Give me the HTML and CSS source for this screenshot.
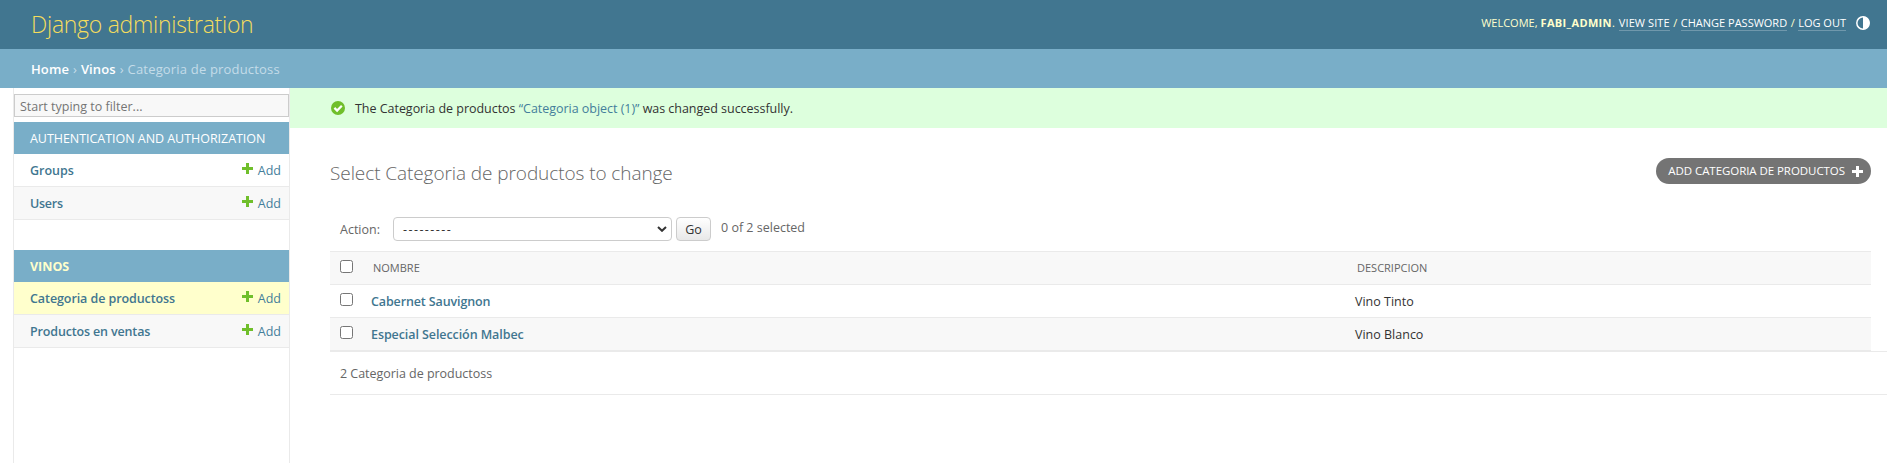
FILE: index.html
```html
<!DOCTYPE html>
<html lang="en">
<head>
<meta charset="utf-8">
<title>Select Categoria de productos to change | Django site admin</title>
<link rel="stylesheet" href="styles.css">
</head>
<body>
<header class="header">
  <h1 class="site-name"><span class="t-site">Django administration</span></h1>
  <div class="user-tools">
    <span class="t-welcome">WELCOME,</span>
    <strong class="t-user">FABI_ADMIN</strong><span class="dot">.</span>
    <a class="t-view">VIEW SITE</a><span class="slash">/</span><a class="t-pass">CHANGE PASSWORD</a><span class="slash">/</span><a class="t-logout">LOG OUT</a>
    <svg class="theme" viewBox="0 0 14 14"><circle cx="7" cy="7" r="6.2" fill="none" stroke="#fff" stroke-width="1.5"/><path d="M7 0.5a6.5 6.5 0 0 1 0 13z" fill="#fff"/></svg>
  </div>
</header>
<nav class="breadcrumbs"><a class="t-home">Home</a><i>›</i><a class="t-vinos">Vinos</a><i>›</i><span class="t-crumb">Categoria de productoss</span></nav>
<div class="main">
  <aside class="sidebar">
    <div class="filter"><span class="t-filter">Start typing to filter...</span></div>
    <section class="module">
      <h2 class="caption"><span class="t-auth">AUTHENTICATION AND AUTHORIZATION</span></h2>
      <div class="model"><a class="name t-groups">Groups</a><a class="add"><svg class="plus" viewBox="0 0 11 11"><path d="M4 0h3v4h4v3H7v4H4V7H0V4h4z"/></svg><span class="t-add">Add</span></a></div>
      <div class="model alt"><a class="name t-users">Users</a><a class="add"><svg class="plus" viewBox="0 0 11 11"><path d="M4 0h3v4h4v3H7v4H4V7H0V4h4z"/></svg><span class="t-add">Add</span></a></div>
    </section>
    <section class="module">
      <h2 class="caption current"><span class="t-app">VINOS</span></h2>
      <div class="model selected"><a class="name t-cat">Categoria de productoss</a><a class="add"><svg class="plus" viewBox="0 0 11 11"><path d="M4 0h3v4h4v3H7v4H4V7H0V4h4z"/></svg><span class="t-add">Add</span></a></div>
      <div class="model alt"><a class="name t-prod">Productos en ventas</a><a class="add"><svg class="plus" viewBox="0 0 11 11"><path d="M4 0h3v4h4v3H7v4H4V7H0V4h4z"/></svg><span class="t-add">Add</span></a></div>
    </section>
  </aside>
  <main class="content">
    <div class="message"><svg class="check" viewBox="0 0 14 14"><circle cx="7" cy="7" r="7" fill="#70bf2b"/><path d="M3.4 6.9l2.7 2.7 4.7-4.9" fill="none" stroke="#fff" stroke-width="2.2"/></svg><span class="t-msg">The Categoria de productos <a>“Categoria object (1)”</a> was changed successfully.</span></div>
    <div class="title-row">
      <h1 class="title"><span class="t-title">Select Categoria de productos to change</span></h1>
      <a class="add-button"><span class="t-button">ADD CATEGORIA DE PRODUCTOS</span><svg class="plus" viewBox="0 0 11 11"><path d="M4 0h3v4h4v3H7v4H4V7H0V4h4z"/></svg></a>
    </div>
    <div class="actions">
      <label class="t-action">Action:</label>
      <div class="select"><span class="t-dash">---------</span><svg class="arrow" viewBox="0 0 10 6"><path d="M1 1l4 3.8L9 1" fill="none" stroke="#333" stroke-width="2"/></svg></div>
      <div class="go"><span class="t-go">Go</span></div>
      <span class="counter">0 of 2 selected</span>
    </div>
    <div class="results">
      <div class="row head"><span class="box"></span><span class="col">NOMBRE</span><span class="col">DESCRIPCION</span></div>
      <div class="row"><span class="box"></span><a class="col t-cab">Cabernet Sauvignon</a><span class="col">Vino Tinto</span></div>
      <div class="row alt"><span class="box"></span><a class="col t-esp">Especial Selección Malbec</a><span class="col">Vino Blanco</span></div>
    </div>
    <p class="paginator">2 Categoria de productoss</p>
  </main>
</div>
</body>
</html>
```
FILE: styles.css
```css
* { box-sizing: border-box; }
body { margin: 0; height: 463px; overflow: hidden; background: #fff; color: #333; font-family: "Open Sans", "Noto Sans", sans-serif; font-size: 12.5px; line-height: 18px; }
h1, h2, p { margin: 0; font-weight: 400; }
span, a, strong, label { white-space: nowrap; }
i { font-style: normal; }
.header { height: 49px; background: #417690; display: flex; justify-content: space-between; padding: 0 17px 0 31px; }
.site-name { color: #f5dd5d; font-size: 23px; font-weight: 300; line-height: 49px; letter-spacing: -.28px; }
.user-tools { display: flex; height: 46px; align-items: center; color: #ffc; font-size: 11px; }
.user-tools a { color: #fff; border-bottom: 1px solid rgba(255,255,255,.25); line-height: 15px; }
.t-user { font-weight: 700; margin-left: 3px; letter-spacing: .35px; }
.t-view { letter-spacing: .1px; }
.dot { margin-right: 4px; }
.slash { margin: 0 3.5px; }
.theme { width: 14px; height: 14px; margin-left: 10px; }
.breadcrumbs { height: 39px; background: #79aec8; display: flex; align-items: center; padding: 0 0 0 31px; color: #c4dce8; font-size: 13px; }
.breadcrumbs a { color: #fff; font-weight: 600; letter-spacing: .1px; }
.breadcrumbs i { margin: 0 4px; }
.t-crumb { letter-spacing: .18px; }
.main { display: flex; height: 375px; padding-left: 13px; }
.sidebar { width: 277px; border: solid #eaeaea; border-width: 0 1px; padding-top: 6px; }
.filter { height: 23px; border: 1px solid #ccc; background: #f8f8f8; color: #757575; padding-left: 5px; line-height: 23px; }
.module { margin-top: 5px; }
.module + .module { margin-top: 30px; }
.caption { height: 32px; background: #79aec8; color: #fff; padding-left: 16px; font-size: 12.5px; line-height: 33px; }
.t-auth { letter-spacing: -.04px; }
.current { color: #ffc; font-weight: 700; }
.model { height: 33px; border-bottom: 1px solid #eaeaea; display: flex; justify-content: space-between; padding: 0 8px 0 16px; line-height: 34px; color: #417690; }
.alt { background: #f8f8f8; }
.selected { background: #ffc; }
.name { font-weight: 600; }
.t-users { letter-spacing: -.25px; }
.t-cat { letter-spacing: -.08px; }
.t-prod { letter-spacing: -.15px; }
.add { display: flex; color: #447e9b; }
.plus { width: 11px; height: 11px; fill: #70bf2b; }
.add .plus { margin: 9px 5px 0 0; }
.content { flex: 1; min-width: 0; }
.message { height: 40px; background: #dfd; display: flex; align-items: center; padding-left: 41px; }
.t-msg { letter-spacing: -.03px; padding-top: 2px; }
.message a { color: #447e9b; }
.check { width: 14px; height: 14px; margin-right: 10px; }
.title-row { display: flex; justify-content: space-between; padding: 30px 16px 0 40px; height: 89px; }
.title { font-size: 19px; font-weight: 300; color: #666; line-height: 30px; letter-spacing: -.08px; }
.add-button { height: 26px; border-radius: 13px; background: #747474; color: #fff; display: flex; align-items: center; padding: 0 8px 0 12px; font-size: 11.5px; letter-spacing: -.06px; }
.add-button .plus { fill: #fff; margin-left: 7px; }
.actions { display: flex; padding-left: 50px; height: 34px; color: #666; line-height: 25px; }
.select { width: 279px; height: 24px; border: 1px solid #ccc; border-radius: 4px; margin-left: 13px; padding: 0 4px 0 9px; display: flex; align-items: center; justify-content: space-between; color: #333; }
.t-dash { letter-spacing: 1.45px; }
.arrow { width: 10px; height: 6px; }
.go { width: 35px; height: 24px; border: 1px solid #ccc; border-radius: 4px; margin: 0 10px 0 4px; background: linear-gradient(#fff, #e8e8e8); color: #333; text-align: center; line-height: 23px; }
.counter { line-height: 22px; }
.results { margin: 0 16px 0 40px; border-top: 1px solid #eaeaea; }
.row { display: grid; grid-template-columns: 41px 984px 1fr; height: 33px; border-bottom: 1px solid #eaeaea; line-height: 34px; }
.head { background: #f8f8f8; color: #666; font-size: 11px; line-height: 32px; font-weight: 500; }
.head .col { padding-left: 2px; }
.box { width: 13px; height: 13px; margin: 8px 0 0 10px; border: 1px solid #767676; border-radius: 2.5px; background: #fff; }
a.col { color: #417690; font-weight: 600; }
.t-cab { letter-spacing: -.12px; }
.t-esp { letter-spacing: -.08px; }
.paginator { margin-left: 40px; height: 44px; border: solid #eaeaea; border-width: 1px 0; padding-left: 10px; color: #666; line-height: 44px; letter-spacing: -.03px; }
```
